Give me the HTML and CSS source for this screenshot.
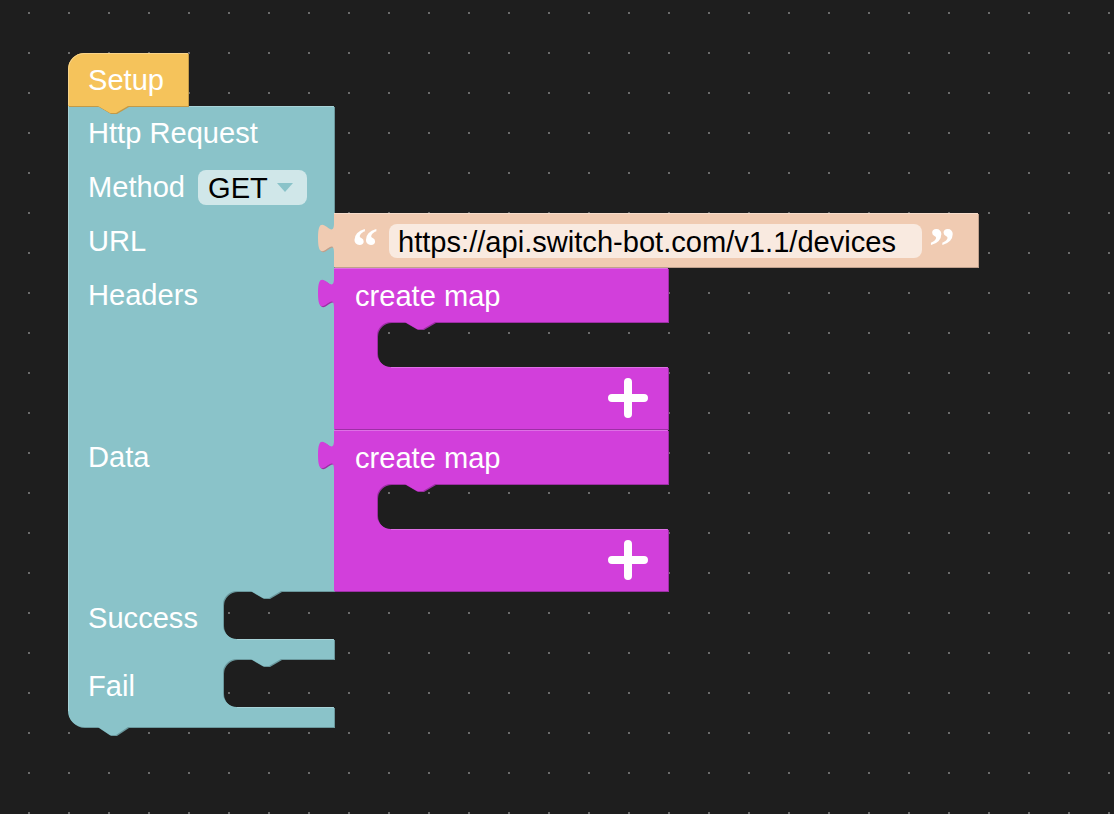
FILE: index.html
```html
<!DOCTYPE html>
<html lang="en">
<head>
<meta charset="utf-8">
<title>Blockly workspace</title>
<link rel="stylesheet" href="styles.css">
</head>
<body>
<div class="workspace">
<svg class="canvas" width="1114" height="814" viewBox="0 0 1114 814">
  <defs>
    <pattern id="grid" x="0" y="0" width="40" height="40" patternUnits="userSpaceOnUse">
      <rect class="dot" x="28" y="12" width="2" height="2"></rect>
    </pattern>
  </defs>
  <rect class="grid" x="0" y="0" width="1114" height="814"></rect>

  <!-- HTTP request block (teal) -->
  <g class="block teal">
    <path class="dark" transform="translate(1,1)" d="M 68,106 H 98 l 12,7 6,0 12,-7 H 334 V 591 H 281 l -12,7 -6,0 -12,-7 H 237 a 14,14 0 0 0 -14,14 V 625 a 14,14 0 0 0 14,14 H 334 V 659 H 281 l -12,7 -6,0 -12,-7 H 237 a 14,14 0 0 0 -14,14 V 693 a 14,14 0 0 0 14,14 H 334 V 727 H 128 l -12,8 -6,0 -12,-8 H 84 a 16,16 0 0 1 -16,-16 Z"></path>
    <path class="main" d="M 68,106 H 98 l 12,7 6,0 12,-7 H 334 V 591 H 281 l -12,7 -6,0 -12,-7 H 237 a 14,14 0 0 0 -14,14 V 625 a 14,14 0 0 0 14,14 H 334 V 659 H 281 l -12,7 -6,0 -12,-7 H 237 a 14,14 0 0 0 -14,14 V 693 a 14,14 0 0 0 14,14 H 334 V 727 H 128 l -12,8 -6,0 -12,-8 H 84 a 16,16 0 0 1 -16,-16 Z"></path>
    <path class="light" d="M 128,106.5 H 333.5 M 68.5,106 V 711 M 237,639.5 H 333.5 M 237,707.5 H 333.5"></path>
    <text class="label" x="88" y="143">Http Request</text>
    <text class="label" x="88" y="197">Method</text>
    <rect class="dropdown" x="198" y="170" width="109" height="35" rx="8" ry="8"></rect>
    <text class="field-text" x="208" y="198">GET</text>
    <path class="arrow" d="M 277,183 H 293 L 285,192 Z"></path>
    <text class="label" x="88" y="251">URL</text>
    <text class="label" x="88" y="305">Headers</text>
    <text class="label" x="88" y="467">Data</text>
    <text class="label" x="88" y="628">Success</text>
    <text class="label" x="88" y="696">Fail</text>
  </g>

  <!-- Setup hat (yellow) -->
  <g class="block yellow">
    <path class="dark" transform="translate(1,1)" d="M 68,106 V 69 a 16,16 0 0 1 16,-16 H 188 V 106 H 128 l -12,7 -6,0 -12,-7 Z"></path>
    <path class="main" d="M 68,106 V 69 a 16,16 0 0 1 16,-16 H 188 V 106 H 128 l -12,7 -6,0 -12,-7 Z"></path>
    <path class="light" d="M 68.5,105 V 69 a 15.5,15.5 0 0 1 15.5,-15.5 H 187.5"></path>
    <text class="label" x="88" y="90">Setup</text>
  </g>

  <!-- URL text block (peach) -->
  <g class="block peach">
    <path class="dark" transform="translate(1,1)" d="M 334,213 H 978 V 267 H 334 V 253 c 0,-20 -16,16 -16,-15 s 16,5 16,-15 Z"></path>
    <path class="main" d="M 334,213 H 978 V 267 H 334 V 253 c 0,-20 -16,16 -16,-15 s 16,5 16,-15 Z"></path>
    <path class="light" d="M 334,213.5 H 977.5"></path>
    <text class="quote" x="352" y="264">“</text>
    <rect class="textfield" x="389" y="224" width="533" height="34" rx="8" ry="8"></rect>
    <text class="field-text" x="398" y="252">https://api.switch-bot.com/v1.1/devices</text>
    <text class="quote" x="929" y="264">”</text>
  </g>

  <!-- create map (headers) -->
  <g class="block magenta">
    <path class="dark" transform="translate(1,1)" d="M 334,268 H 668 V 322 H 435 l -12,7 -6,0 -12,-7 H 391 a 14,14 0 0 0 -14,14 V 353 a 14,14 0 0 0 14,14 H 668 V 429 H 334 V 308 c 0,-20 -16,16 -16,-15 s 16,5 16,-15 Z"></path>
    <path class="main" d="M 334,268 H 668 V 322 H 435 l -12,7 -6,0 -12,-7 H 391 a 14,14 0 0 0 -14,14 V 353 a 14,14 0 0 0 14,14 H 668 V 429 H 334 V 308 c 0,-20 -16,16 -16,-15 s 16,5 16,-15 Z"></path>
    <path class="light" d="M 334,268.5 H 667.5 M 391,367.5 H 667.5"></path>
    <text class="label" x="355" y="306">create map</text>
    <path class="plus" d="M 612,398 H 644 M 628,382 V 414"></path>
  </g>

  <!-- create map (data) -->
  <g class="block magenta" transform="translate(0,162)">
    <path class="dark" transform="translate(1,1)" d="M 334,268 H 668 V 322 H 435 l -12,7 -6,0 -12,-7 H 391 a 14,14 0 0 0 -14,14 V 353 a 14,14 0 0 0 14,14 H 668 V 429 H 334 V 308 c 0,-20 -16,16 -16,-15 s 16,5 16,-15 Z"></path>
    <path class="main" d="M 334,268 H 668 V 322 H 435 l -12,7 -6,0 -12,-7 H 391 a 14,14 0 0 0 -14,14 V 353 a 14,14 0 0 0 14,14 H 668 V 429 H 334 V 308 c 0,-20 -16,16 -16,-15 s 16,5 16,-15 Z"></path>
    <path class="light" d="M 334,268.5 H 667.5 M 391,367.5 H 667.5"></path>
    <text class="label" x="355" y="306">create map</text>
    <path class="plus" d="M 612,398 H 644 M 628,382 V 414"></path>
  </g>
</svg>
</div>
</body>
</html>
```

FILE: styles.css
```css
html, body {
  margin: 0;
  padding: 0;
  background: #1e1e1e;
  overflow: hidden;
}

.workspace {
  width: 1114px;
  height: 814px;
  position: relative;
  background: #1e1e1e;
}

.canvas {
  display: block;
}

.dot {
  fill: #6b6b6b;
}

.grid {
  fill: url(#grid);
}

.block .light {
  fill: none;
  stroke-width: 1;
}

.teal .main { fill: #8ac3c9; }
.teal .dark { fill: #6a979c; }
.teal .light { stroke: #a8d3d8; }

.yellow .main { fill: #f5c35b; }
.yellow .dark { fill: #c29a48; }
.yellow .light { stroke: #f8d48a; }

.peach .main { fill: #f0cbb2; }
.peach .dark { fill: #bfa08c; }
.peach .light { stroke: #f6dccb; }

.magenta .main { fill: #d23fdb; }
.magenta .dark { fill: #9d2fa5; }
.magenta .light { stroke: #de70e5; }

.label {
  fill: #ffffff;
  font-family: "Liberation Sans", Arial, sans-serif;
  font-size: 29.1px;
}

.field-text {
  fill: #000000;
  font-family: "Liberation Sans", Arial, sans-serif;
  font-size: 29.1px;
}

.dropdown {
  fill: #d0e7e9;
}

.arrow {
  fill: #8ac3c9;
}

.textfield {
  fill: #f9eae0;
}

.quote {
  fill: #ffffff;
  font-family: "Liberation Serif", "Times New Roman", serif;
  font-weight: bold;
  font-size: 52px;
}

.plus {
  fill: none;
  stroke: #ffffff;
  stroke-width: 8;
  stroke-linecap: round;
}
```
